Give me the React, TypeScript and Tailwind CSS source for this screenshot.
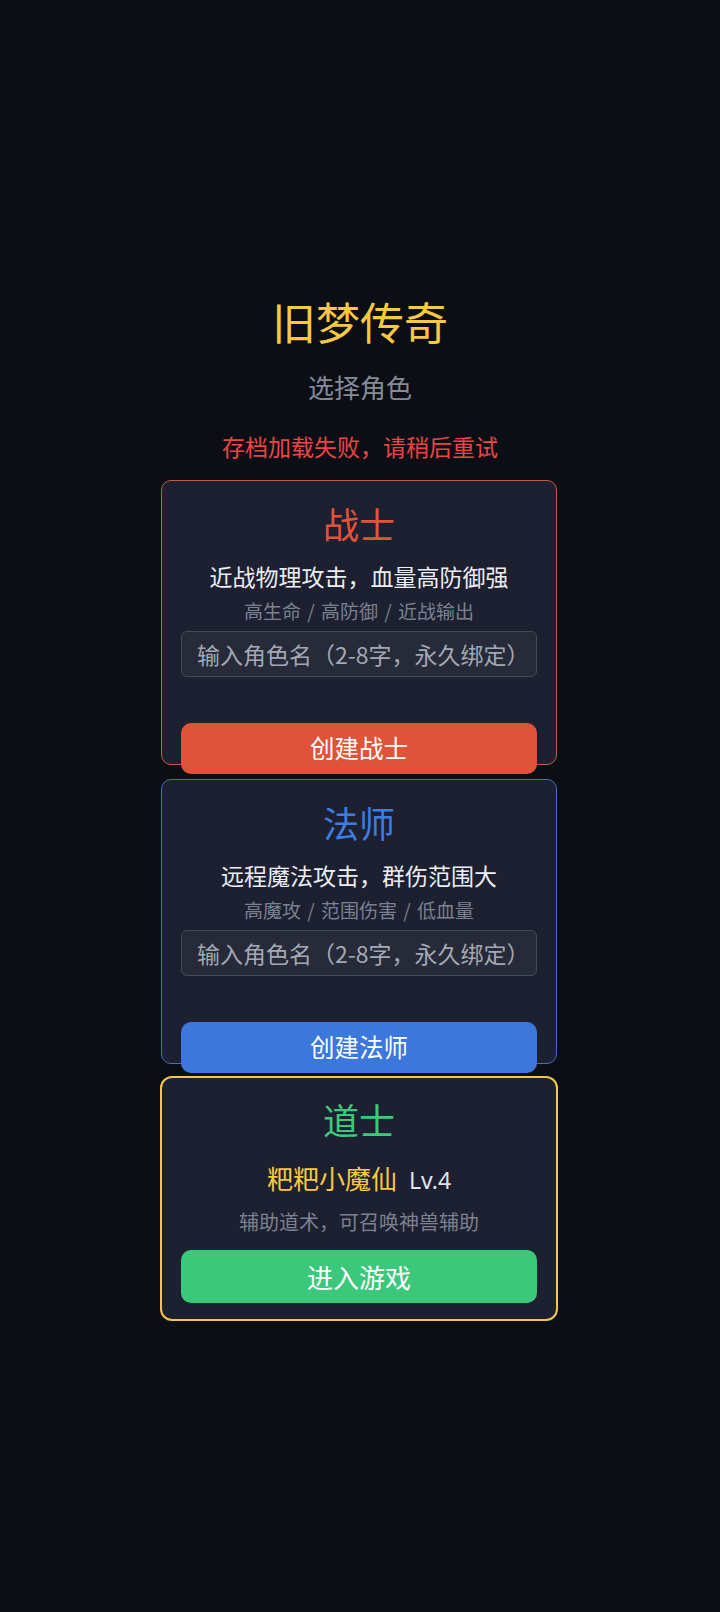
import { useState } from "react";

type RoleCard = {
  key: string;
  title: string;
  desc: string;
  tags: string;
  action: string;
  titleColor: string;
  borderColor: string;
  buttonColor: string;
};

const roles: RoleCard[] = [
  {
    key: "warrior",
    title: "战士",
    desc: "近战物理攻击，血量高防御强",
    tags: "高生命 / 高防御 / 近战输出",
    action: "创建战士",
    titleColor: "text-[#e2533c]",
    borderColor: "border-[#c45a4b]",
    buttonColor: "bg-[#df533b]",
  },
  {
    key: "mage",
    title: "法师",
    desc: "远程魔法攻击，群伤范围大",
    tags: "高魔攻 / 范围伤害 / 低血量",
    action: "创建法师",
    titleColor: "text-[#3e7de0]",
    borderColor: "border-[#3f70c2]",
    buttonColor: "bg-[#3c78dc]",
  },
];

const font = { fontFamily: '"Noto Sans CJK SC", "Noto Sans", sans-serif' };

function NewRoleCard({ role }: { role: RoleCard }) {
  const [name, setName] = useState("");
  return (
    // fixed height: the create button hangs a little below the card edge
    <div className={`h-[285px] w-[396px] rounded-[10px] border bg-[#1d2030] px-[19px] pt-[18px] ${role.borderColor}`}>
      <h2 className={`text-center text-[36px] leading-[48px] ${role.titleColor}`}>{role.title}</h2>
      <p className="mt-[14px] text-center text-[23px] leading-[30px] text-[#eceef4]">{role.desc}</p>
      <p className="mt-[7px] text-center text-[19px] leading-[26px] text-[#7c8191] [word-spacing:2px]">{role.tags}</p>
      <input
        value={name}
        onChange={(event) => setName(event.target.value)}
        placeholder="输入角色名（2-8字，永久绑定）"
        className="mt-[7px] block h-[46px] w-full rounded-[6px] border border-[#464b5a] bg-[#262a39] px-[15px] text-[23px] text-white placeholder:text-[#a4a8b4] outline-none"
        style={font}
      />
      <button className={`mt-[46px] block h-[51px] w-full rounded-[10px] text-[24.5px] text-white ${role.buttonColor}`} style={font}>
        {role.action}
      </button>
    </div>
  );
}

export default function App() {
  return (
    <div className="flex min-h-screen flex-col items-center justify-center bg-[#0b0e15] pt-[4px]" style={font}>
      <h1 className="text-[44px] leading-[52px] text-[#f8c842]">旧梦传奇</h1>
      <p className="mt-[24px] text-[26px] leading-[32px] text-[#858a97]">选择角色</p>
      <p className="mt-[28px] text-[23px] leading-[30px] text-[#ec4545]">存档加载失败，请稍后重试</p>

      <div className="mt-[19px] flex flex-col gap-[14px]">
        {roles.map((role) => (
          <NewRoleCard key={role.key} role={role} />
        ))}

        <div className="-mt-[2px] w-[398px] -translate-x-[1px] rounded-[12px] border-2 border-[#f2c744] bg-[#1d2030] px-[19px] pt-[17px] pb-[16px]">
          <h2 className="text-center text-[36px] leading-[48px] text-[#3ec97a]">道士</h2>
          <div className="mt-[18px] flex items-baseline justify-center leading-[34px]">
            <span className="text-[26px] text-[#f8c842]">粑粑小魔仙</span>
            <span className="ml-[12px] text-[23px] text-[#e1e4ee]" style={{ fontFamily: '"Noto Sans", sans-serif' }}>Lv.4</span>
          </div>
          <p className="mt-[11px] text-center text-[20px] leading-[28px] text-[#7c8191]">辅助道术，可召唤神兽辅助</p>
          <button className="mt-[14px] block h-[53px] w-full rounded-[10px] bg-[#3cc87a] text-[26px] text-white" style={font}>
            进入游戏
          </button>
        </div>
      </div>
    </div>
  );
}
